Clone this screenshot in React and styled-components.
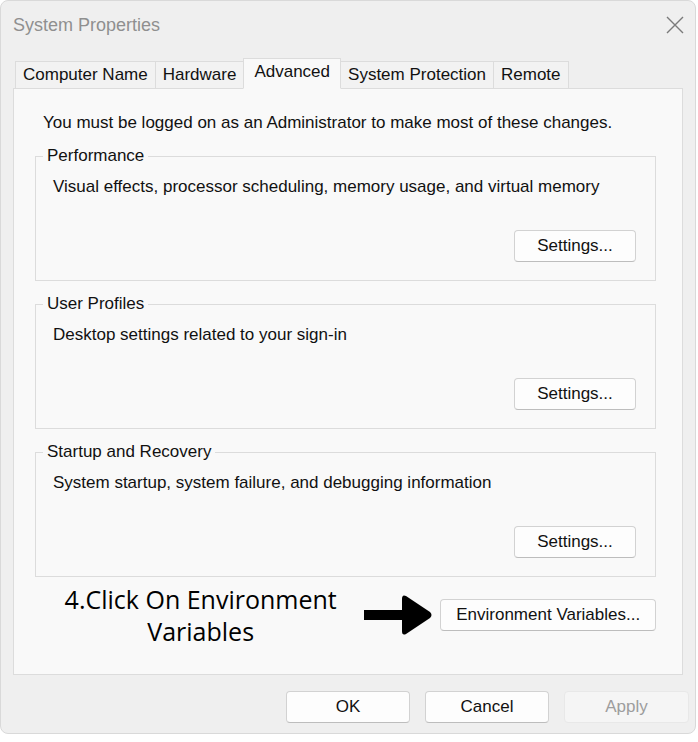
import styled, { createGlobalStyle } from "styled-components";

const GlobalStyle = createGlobalStyle`
  body {
    margin: 0;
    background: #ffffff;
    font-family: "Liberation Sans", Arial, sans-serif;
  }
`;

const tabs = ["Computer Name", "Hardware", "Advanced", "System Protection", "Remote"];

const groups = [
  { title: "Performance", text: "Visual effects, processor scheduling, memory usage, and virtual memory" },
  { title: "User Profiles", text: "Desktop settings related to your sign-in" },
  { title: "Startup and Recovery", text: "System startup, system failure, and debugging information" },
];

const Arrow = () => (
  <ArrowSvg viewBox="0 0 68 42" width="68" height="42">
    <rect x="0" y="16" width="42" height="10" fill="#000" />
    <path
      d="M38 5 Q38 0 42 2 L66 18 Q69 21 66 24 L42 40 Q38 42 38 37 Z"
      fill="#000"
    />
  </ArrowSvg>
);

const App = () => {
  return (
    <>
      <GlobalStyle />
      <Window>
        <TitleBar>
          <Title>System Properties</Title>
          <CloseIcon viewBox="0 0 18 18" width="18" height="18">
            <path d="M1 1 L17 17 M17 1 L1 17" stroke="#7a7a7a" strokeWidth="1.4" />
          </CloseIcon>
        </TitleBar>
        <TabRow>
          {tabs.map((t) => (
            <Tab key={t} $active={t === "Advanced"}>
              {t}
            </Tab>
          ))}
        </TabRow>
        <Panel>
          <Notice>You must be logged on as an Administrator to make most of these changes.</Notice>
          {groups.map((g) => (
            <Group key={g.title}>
              <Legend>{g.title}</Legend>
              <Desc>{g.text}</Desc>
              <GroupActions>
                <Button $w={122}>Settings...</Button>
              </GroupActions>
            </Group>
          ))}
          <BottomRow>
            <Annotation>
              4.Click On Environment
              <br />
              Variables
            </Annotation>
            <Arrow />
            <Button $w={216}>Environment Variables...</Button>
          </BottomRow>
        </Panel>
        <Footer>
          <Button $w={124}>OK</Button>
          <Button $w={124}>Cancel</Button>
          <Button $w={125} $disabled>
            Apply
          </Button>
        </Footer>
      </Window>
    </>
  );
};

const Window = styled.div`
  width: 694px;
  height: 732px;
  background: #efefef;
  border: 1px solid #d9d9d9;
  border-radius: 8px;
  display: flex;
  flex-direction: column;
  overflow: hidden;
`;

const TitleBar = styled.div`
  height: 48px;
  display: flex;
  align-items: center;
  justify-content: space-between;
  padding: 0 11px 0 12px;
`;

const Title = styled.div`
  font-size: 18px;
  color: #8f8f8f;
`;

const CloseIcon = styled.svg`
  display: block;
`;

const ArrowSvg = styled.svg`
  display: block;
  margin-left: -10px;
  flex-shrink: 0;
`;

const TabRow = styled.div`
  display: flex;
  align-items: flex-end;
  height: 31px;
  margin-top: 8px;
  padding-left: 15px;
  position: relative;
  z-index: 1;
`;

const Tab = styled.div`
  height: ${(p) => (p.$active ? "31px" : "27px")};
  padding: 0 ${(p) => (p.$active ? "10px" : "7px")};
  display: flex;
  align-items: center;
  font-size: 17px;
  color: #111;
  background: ${(p) => (p.$active ? "#f9f9f9" : "#f2f2f2")};
  border: 1px solid #dcdcdc;
  border-bottom: ${(p) => (p.$active ? "1px solid #f9f9f9" : "none")};
  margin-left: -1px;
  margin-bottom: ${(p) => (p.$active ? "-1px" : "0")};
  padding-bottom: ${(p) => (p.$active ? "4px" : "0")};
  box-sizing: border-box;
  white-space: nowrap;
`;

const Panel = styled.div`
  margin: 0 12px;
  height: 587px;
  box-sizing: border-box;
  background: #f9f9f9;
  border: 1px solid #dcdcdc;
  padding: 24px 26px 0 21px;
  display: flex;
  flex-direction: column;
`;

const Notice = styled.div`
  font-size: 17px;
  line-height: 20px;
  color: #111;
  margin-left: 8px;
`;

const Group = styled.div`
  margin-top: 23px;
  border: 1px solid #dcdcdc;
  padding: 0 19px 18px 17px;
  display: flex;
  flex-direction: column;
  &:first-of-type {
    margin-top: 27px;
  }
`;

const Legend = styled.div`
  font-size: 17px;
  line-height: 20px;
  color: #111;
  margin: -11px 0 0 -10px;
  padding: 0 4px;
  background: #f9f9f9;
  width: fit-content;
`;

const Desc = styled.div`
  font-size: 17px;
  line-height: 20px;
  color: #111;
  margin-top: 11px;
`;

const GroupActions = styled.div`
  display: flex;
  justify-content: flex-end;
  margin-top: 33px;
`;

const Button = styled.div`
  width: ${(p) => p.$w}px;
  height: 32px;
  box-sizing: border-box;
  display: flex;
  align-items: center;
  justify-content: center;
  font-size: 17px;
  color: ${(p) => (p.$disabled ? "#9d9d9d" : "#111")};
  background: ${(p) => (p.$disabled ? "#f5f5f5" : "#fdfdfd")};
  border: 1px solid ${(p) => (p.$disabled ? "#e8e8e8" : "#d2d2d2")};
  border-bottom-color: ${(p) => (p.$disabled ? "#e8e8e8" : "#bdbdbd")};
  border-radius: 4px;
  white-space: nowrap;
`;

const BottomRow = styled.div`
  display: flex;
  align-items: center;
  margin-top: 6px;
  gap: 8px;
`;

const Annotation = styled.div`
  width: 332px;
  text-align: center;
  font-family: "Open Sans", sans-serif;
  font-size: 25px;
  font-stretch: 94%;
  line-height: 32px;
  color: #000;
`;

const Footer = styled.div`
  display: flex;
  justify-content: flex-end;
  gap: 15px;
  margin-top: 16px;
  padding-right: 6px;
`;

export default App;
